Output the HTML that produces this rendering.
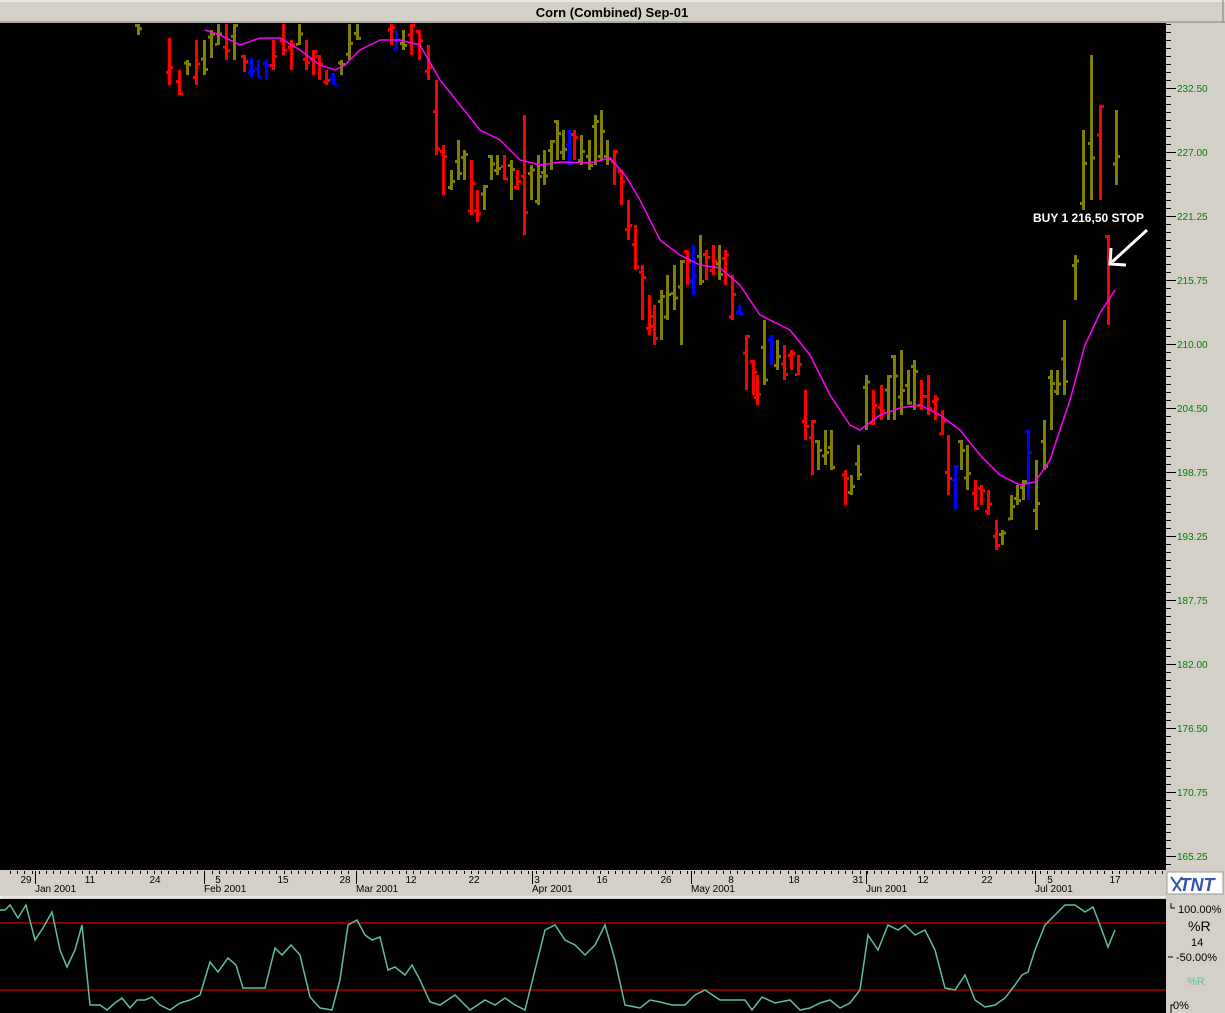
<!DOCTYPE html>
<html><head><meta charset="utf-8">
<style>
html,body{margin:0;padding:0;background:#d4d0c8;width:1225px;height:1013px;overflow:hidden}
svg{display:block}
text{font-family:"Liberation Sans",sans-serif}
</style></head><body>
<svg id="s" width="1225" height="1013" xmlns="http://www.w3.org/2000/svg">
<rect x="0" y="0" width="1225" height="1013" fill="#d4d0c8"/>
<line x1="0" y1="1" x2="1225" y2="1" stroke="#fff"/>
<line x1="0" y1="22" x2="1225" y2="22" stroke="#808080"/>
<line x1="1223" y1="0" x2="1223" y2="22" stroke="#808080"/>
<text x="612" y="17" text-anchor="middle" font-size="13" font-weight="bold" fill="#000">Corn (Combined) Sep-01</text>
<rect x="0" y="23" width="1166" height="847" fill="#000"/>
<rect x="0" y="899" width="1166" height="114" fill="#000"/>
<line x1="0" y1="897" x2="1166" y2="897" stroke="#fff"/>
<line x1="1" y1="896" x2="1" y2="899" stroke="#fff"/>
<g id="g"></g>
<line x1="0" y1="923" x2="1166" y2="923" stroke="#f00"/>
<line x1="0" y1="990" x2="1166" y2="990" stroke="#f00"/>
<text x="1033" y="222" font-size="12" font-weight="bold" fill="#fff">BUY 1 216,50 STOP</text>
<line x1="1147" y1="230" x2="1112" y2="262" stroke="#fff" stroke-width="3"/>
<polyline points="1111,248 1110,264 1126,265" fill="none" stroke="#fff" stroke-width="3"/>
<rect x="1167" y="872" width="56" height="22" fill="#fff" stroke="#999"/>
<text x="1197" y="891" text-anchor="middle" font-size="18" font-weight="bold" font-style="italic" fill="#3355aa">TNT</text>
<path d="M1171,877 l10,14 M1173,891 l9,-14" stroke="#3355aa" stroke-width="2"/>
<g font-size="11" fill="#000">
<text x="1178" y="913">100.00%</text>
<text x="1188" y="931" font-size="14">%R</text>
<text x="1191" y="946">14</text>
<text x="1176" y="961">-50.00%</text>
<text x="1187" y="985" fill="#5fbf99">%R</text>
<text x="1173" y="1009">0%</text>
</g>
<path d="M1171,903 v5 h4 M1168,957 h5 M1171,1013 v-8 h3" stroke="#000" fill="none"/>
</svg>
<script>
var NS="http://www.w3.org/2000/svg",g=document.getElementById('g'),s=document.getElementById('s');
function el(t,a,p){var e=document.createElementNS(NS,t);for(var k in a)e.setAttribute(k,a[k]);(p||g).appendChild(e);return e;}
var O="#808000",R="#f00",B="#00f";
var bars=[[137,24,35,O],[168,38,85,R],[178,70,95,R],[186,60,75,O],[195,40,85,R],[203,40,75,O],[210,30,58,O],[217,24,45,O],[225,24,60,R],[233,24,60,O],[243,55,72,R],[250,58,77,B],[257,60,78,B],[265,60,80,B],[272,40,70,R],[282,24,55,R],[290,40,70,R],[298,24,45,O],[305,40,70,R],[312,50,75,R],[318,55,80,R],[325,70,85,R],[332,73,85,B],[340,60,75,O],[348,24,60,O],[356,24,40,O],[390,24,45,R],[395,30,50,B],[402,30,50,O],[410,24,55,R],[418,30,60,R],[427,45,80,R],[435,80,155,R],[442,145,195,R],[450,170,190,O],[457,140,180,O],[463,150,180,O],[470,160,215,R],[476,190,222,R],[483,185,210,O],[490,155,180,O],[496,155,175,O],[503,155,180,R],[510,160,200,O],[516,170,190,R],[523,115,235,R],[530,165,200,O],[537,155,205,O],[543,150,185,O],[550,140,170,O],[556,120,160,O],[562,130,160,O],[568,130,165,B],[573,130,160,R],[580,135,165,O],[588,140,170,O],[594,115,165,O],[600,110,160,O],[606,140,165,O],[613,150,185,R],[620,170,205,R],[627,200,240,R],[634,225,270,R],[641,265,320,R],[648,295,335,R],[653,305,345,R],[660,290,340,O],[666,275,320,O],[673,265,310,O],[680,260,345,O],[686,250,285,R],[692,245,295,B],[699,235,285,O],[705,250,280,R],[712,245,275,R],[718,245,280,O],[724,250,285,R],[731,275,320,R],[738,305,315,B],[745,335,390,R],[752,360,395,R],[756,375,405,R],[763,320,385,O],[770,335,365,B],[776,340,370,O],[783,345,380,R],[790,350,370,R],[797,355,375,R],[804,390,440,R],[811,420,475,R],[817,440,470,O],[824,430,465,O],[830,430,470,O],[844,470,505,R],[850,475,495,O],[857,445,480,O],[865,375,430,O],[872,390,425,R],[880,385,420,R],[887,375,420,O],[893,355,420,O],[900,350,415,O],[907,370,405,O],[913,360,410,O],[920,380,410,R],[927,375,415,R],[934,395,420,R],[941,410,435,R],[947,435,495,R],[954,465,510,B],[960,440,470,O],[966,445,490,O],[974,480,510,R],[980,485,505,R],[987,490,515,R],[995,520,550,R],[1001,530,545,O],[1010,495,520,O],[1016,485,505,O],[1022,480,500,O],[1027,430,500,B],[1035,460,530,O],[1043,420,470,O],[1050,370,430,O],[1056,370,395,O],[1063,320,395,O],[1074,255,300,O],[1082,130,210,O],[1090,55,200,O],[1099,105,200,R],[1107,235,325,R],[1115,110,185,O]];
bars.forEach(function(b,i){
 var x=b[0],h=b[1],l=b[2],c=b[3];
 el('rect',{x:x,y:h,width:3,height:l-h,fill:c});
 var o=h+(l-h)*((i*37)%10)/10,cl=h+(l-h)*((i*53+3)%10)/10;
 el('rect',{x:x-2,y:o,width:2,height:3,fill:c});
 el('rect',{x:x+3,y:cl,width:2,height:3,fill:c});
});
var ma="205,30 220,35 240,45 260,38 280,38 300,50 320,65 335,70 345,65 360,50 380,40 400,40 420,45 440,80 460,105 480,130 500,140 520,160 540,165 560,162 590,163 610,158 625,175 640,200 660,240 680,255 700,265 720,268 740,285 760,315 790,330 810,355 830,395 850,425 860,430 880,415 900,408 920,405 940,415 960,430 980,455 1000,475 1020,485 1035,482 1050,460 1070,400 1085,345 1100,313 1115,290";
el('polyline',{points:ma,fill:"none",stroke:"#f0f",'stroke-width':1.5});
var wr="0,910 5,910 10,905 18,918 26,905 35,940 43,928 52,912 60,950 67,967 75,950 82,925 90,1005 100,1005 107,1010 115,1003 122,998 130,1008 137,1000 145,1000 152,997 160,1005 170,1010 180,1003 190,1000 200,995 210,962 218,972 228,958 236,965 243,988 255,988 265,988 275,948 282,955 291,945 300,955 310,997 320,1008 332,1010 340,980 348,925 357,920 365,935 372,940 380,937 388,970 395,967 405,975 412,965 420,980 430,1002 440,1005 455,995 470,1010 485,1000 495,1005 505,998 515,1005 525,1010 535,970 545,930 555,925 565,940 575,945 585,955 595,945 605,925 615,960 625,1005 640,1008 650,1000 660,1002 672,1005 685,1005 695,995 705,990 720,1000 735,1000 745,1000 752,1010 762,997 775,1003 790,1000 800,1010 810,1008 820,1003 830,1000 840,1008 850,1003 860,990 868,935 878,950 888,925 898,930 905,925 915,935 925,930 935,950 945,988 955,990 965,975 975,1000 985,1007 995,1005 1005,998 1015,985 1022,975 1028,972 1035,950 1045,925 1055,915 1065,905 1075,905 1085,912 1093,907 1100,925 1108,947 1115,930";
el('polyline',{points:wr,fill:"none",stroke:"#5fbf99",'stroke-width':1.5},s);
var labs=["232.50","227.00","221.25","215.75","210.00","204.50","198.75","193.25","187.75","182.00","176.50","170.75","165.25"];
for(var y=24;y<868;y+=8)el('line',{x1:1166,y1:y+.5,x2:1171,y2:y+.5,stroke:"#000"},s);
labs.forEach(function(t,i){var y=88+i*64;el('line',{x1:1166,y1:y+.5,x2:1176,y2:y+.5,stroke:"#000"},s);var e=el('text',{x:1177,y:y+4,'font-size':10,fill:"#008000"},s);e.textContent=t;});
for(var x=10;x<1166;x+=7.2)el('line',{x1:Math.round(x)+.5,y1:871,x2:Math.round(x)+.5,y2:874,stroke:"#000"},s);
var d=[["29",26],["11",90],["24",155],["5",218],["15",283],["28",345],["12",411],["22",474],["3",537],["16",602],["26",666],["8",731],["18",794],["31",858],["12",923],["22",987],["5",1050],["17",1115]];
d.forEach(function(a){var e=el('text',{x:a[1],y:883,'font-size':10,'text-anchor':'middle',fill:"#000"},s);e.textContent=a[0];});
var m=[["Jan 2001",35],["Feb 2001",204],["Mar 2001",356],["Apr 2001",532],["May 2001",691],["Jun 2001",866],["Jul 2001",1035]];
m.forEach(function(a){el('line',{x1:a[1]+.5,y1:871,x2:a[1]+.5,y2:884,stroke:"#000"},s);var e=el('text',{x:a[1],y:892,'font-size':10,fill:"#000"},s);e.textContent=a[0];});
</script>
</body></html>
